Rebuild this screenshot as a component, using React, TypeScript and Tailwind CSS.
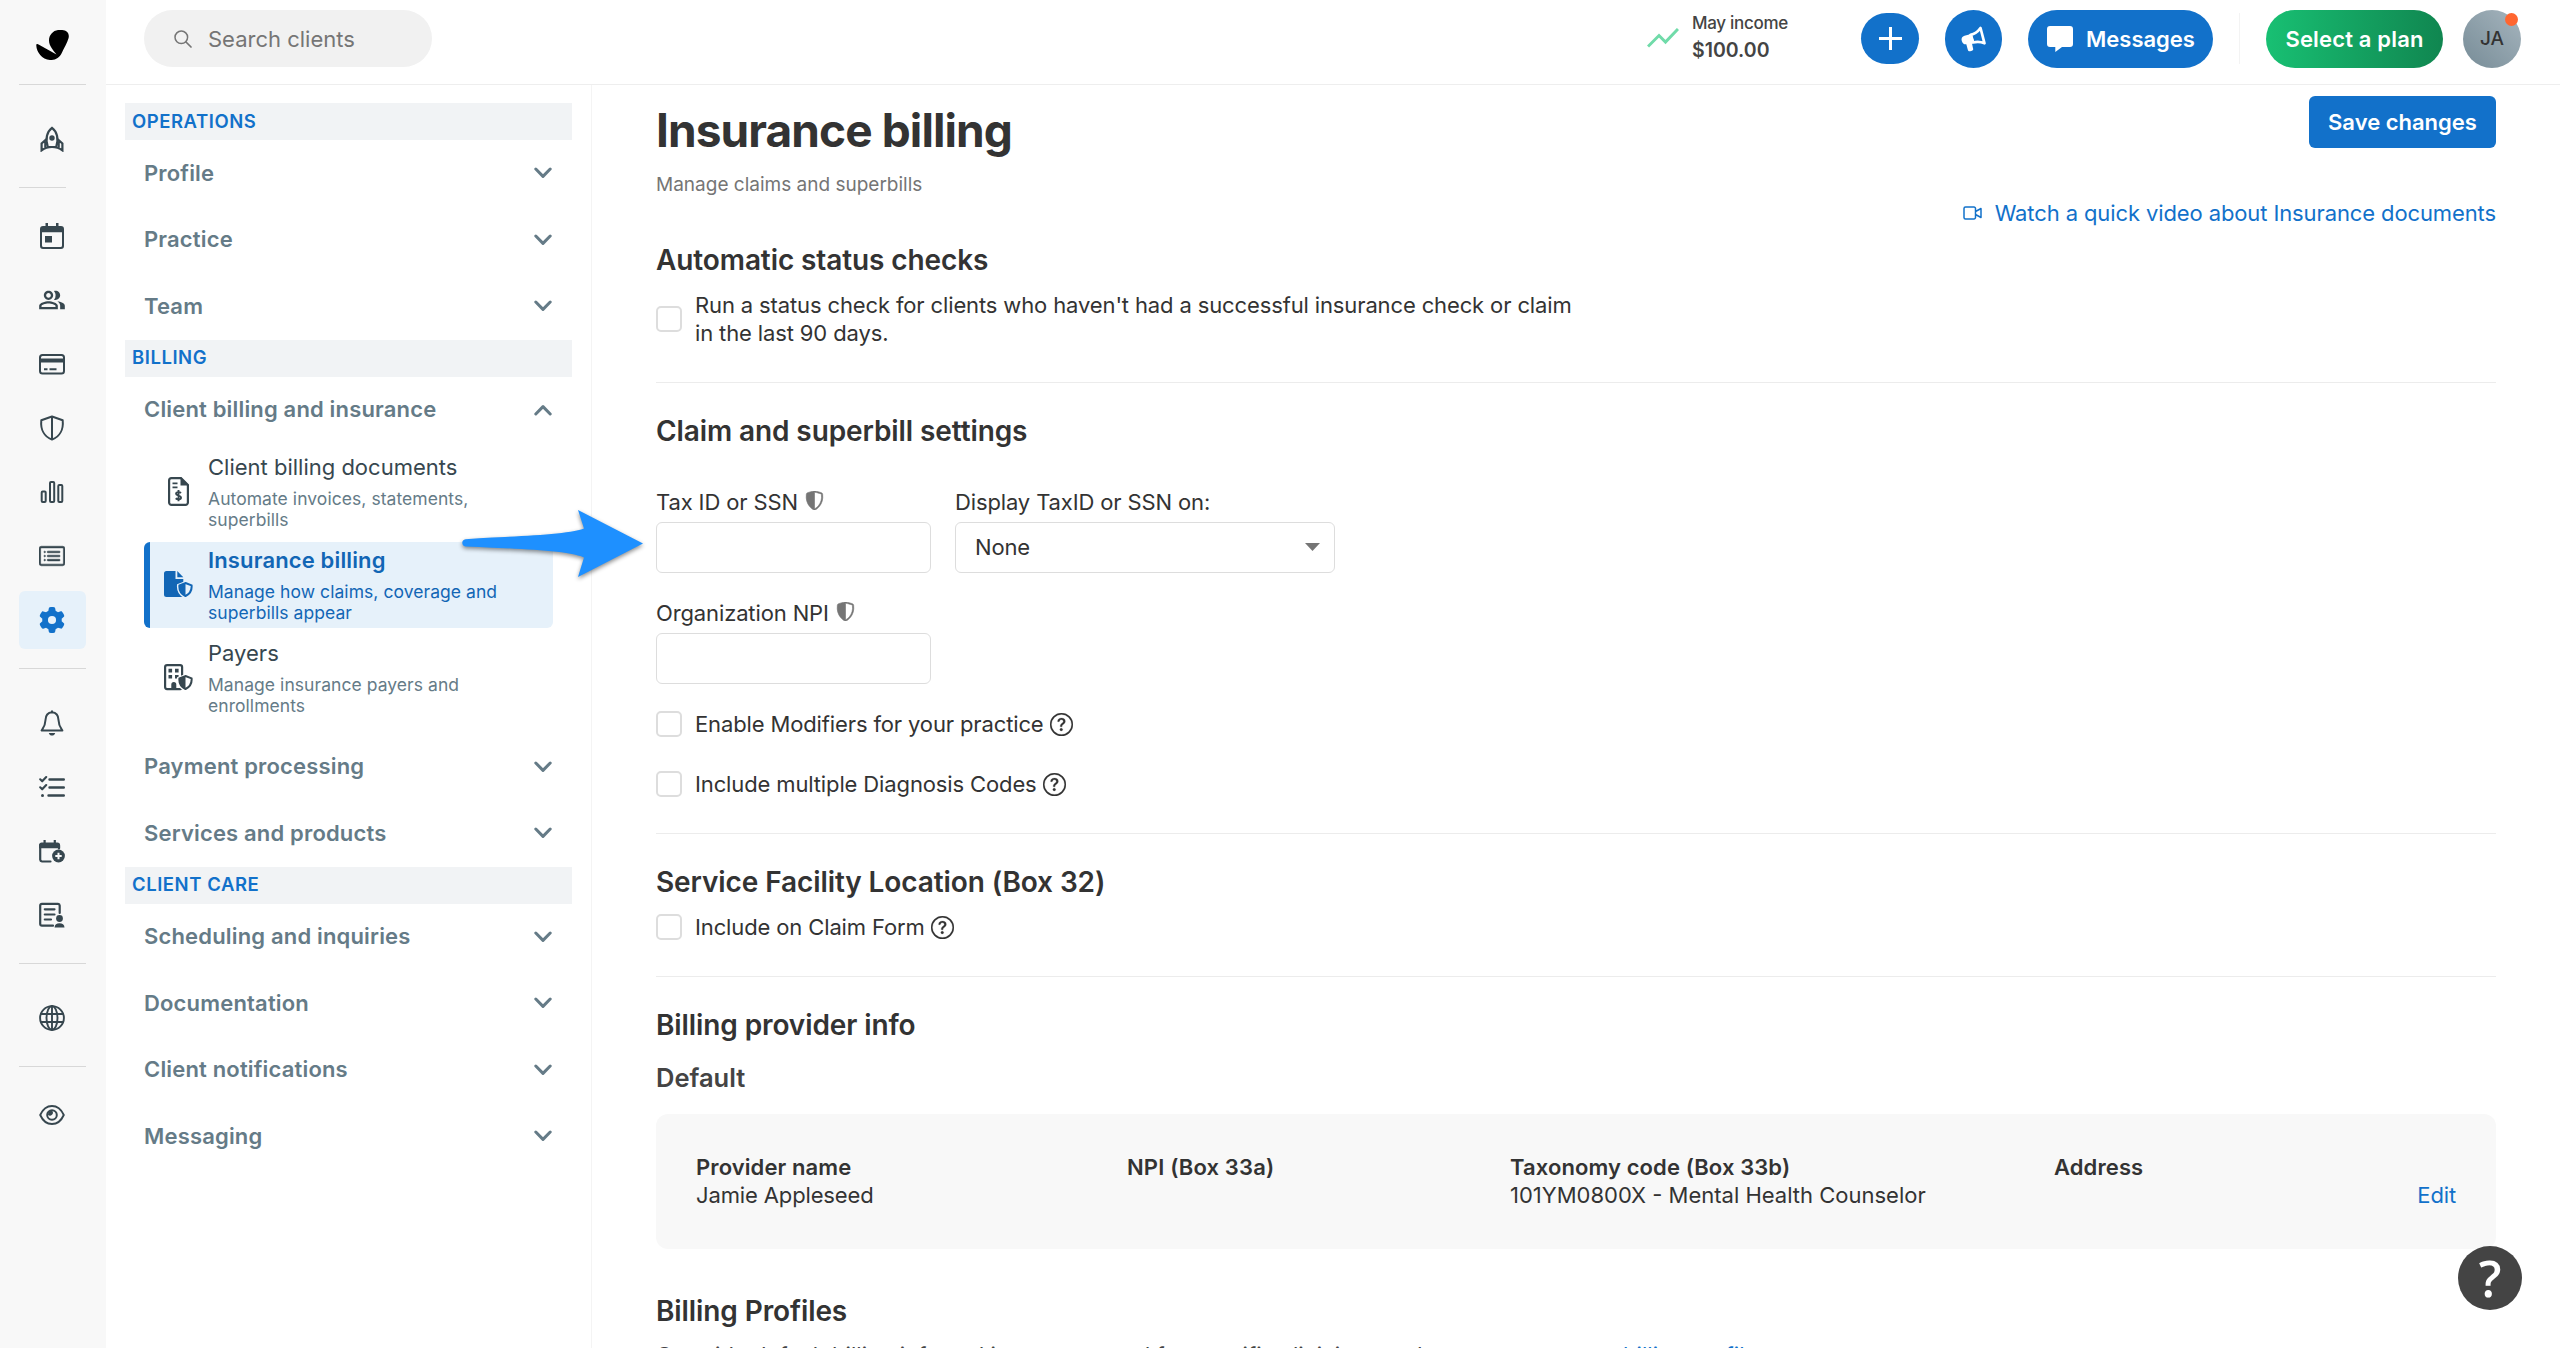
import type { ReactNode } from 'react';
import { BsCardList, BsQuestionCircle, BsShieldShaded } from 'react-icons/bs';
import { FaGear } from 'react-icons/fa6';
import { MdOutlinePeopleAlt } from 'react-icons/md';

const stroke = { fill: 'none', stroke: 'currentColor', strokeLinecap: 'round', strokeLinejoin: 'round' } as const;

const Svg = ({ children, className = 'w-[26px] h-[26px]' }: { children: ReactNode; className?: string }) => (
  <svg viewBox="0 0 26 26" className={className} fill="currentColor">{children}</svg>
);

const Logo = () => (
  <svg viewBox="0 0 33 30" className="w-[33px] h-[30px]" fill="#000">
    <path d="M22 0C28 -.6 34 1 32.6 8C31.200 13 28 18 26 22.500C23.500 28 19 30.300 14 30C6 29.500 .5 22 .3 15.500C.2 13.600 1.500 13.900 3 14.700L20.500 24.600C17.500 20.500 13 16 13 10.500C13 5 17 .6 22 0Z" />
  </svg>
);

const RocketIcon = () => (
  <Svg>
    <g {...stroke} strokeWidth="2.200" strokeLinejoin="miter">
      <path d="M8.800 21C6 13 8 5.500 13 1.800C18 5.500 20 13 17.200 21Z" />
      <path d="M7 13.500L2.600 17.500V24.300C6 21.800 9 21 13 21C17 21 20 21.800 23.400 24.300V17.500L19 13.500M6.300 16V21M19.700 16V21" />
    </g>
    <circle cx="13" cy="12" r="2.700" />
  </Svg>
);

const CalendarIcon = () => (
  <Svg>
    <path d="M6.500 0h2.500v3h8V0h2.500v3H22a3 3 0 0 1 3 3v17a3 3 0 0 1-3 3H4a3 3 0 0 1-3-3V6a3 3 0 0 1 3-3h2.500zM3 9.300V22.500A1.500 1.500 0 0 0 4.500 24h17a1.500 1.500 0 0 0 1.500-1.500V9.300z" fillRule="evenodd" />
    <rect x="6" y="13" width="7" height="6.500" />
  </Svg>
);

const CardIcon = () => (
  <Svg>
    <rect x="1" y="4" width="24" height="18.500" rx="2.500" {...stroke} strokeWidth="2" />
    <path d="M1 7.500h24v4H1zM5 17.300h3.500v2H5zM10.500 17.300h7v2h-7z" />
  </Svg>
);

const ShieldOutlineIcon = () => (
  <Svg>
    <path d="M13 1.500L23.700 5.300C24.600 14 21 21.500 13 24.600C5 21.500 1.400 14 2.300 5.300ZM13 1.500V24.500" {...stroke} strokeWidth="2" />
  </Svg>
);

const BarsIcon = () => (
  <Svg>
    <g {...stroke} strokeWidth="2">
      <rect x="2.700" y="12.500" width="4" height="10.500" rx="1" />
      <rect x="11" y="3" width="4.200" height="20" rx="1" />
      <rect x="19.300" y="6" width="4" height="17" rx="1" />
    </g>
  </Svg>
);

const BellIcon = () => (
  <Svg>
    <path d="M13 2.200C8.500 2.500 6.600 5.500 6.500 10C6.400 15.500 4.600 17.500 2.600 20.500H23.400C21.400 17.500 19.600 15.500 19.500 10C19.400 5.500 17.500 2.500 13 2.200ZM13 2.200V1.200" {...stroke} strokeWidth="2" />
    <path d="M9.800 23h6.400c-.6 1.800-1.700 2.600-3.200 2.600s-2.600-.8-3.200-2.600z" />
  </Svg>
);

const ChecklistIcon = () => (
  <Svg>
    <path d="M10.500 5.500H24.800M10.500 13.500H24.800M9.500 21.500H24.800" {...stroke} strokeWidth="2.400" />
    <path d="M1.200 5.300L3.200 7.300L7.200 3M1.200 13.300L3.200 15.300L7.200 11" {...stroke} strokeWidth="2.100" />
    <circle cx="3.500" cy="21.500" r="1.500" />
  </Svg>
);

const CalendarPlusIcon = () => (
  <Svg>
    <path d="M20 10.500V7.500M11.500 23.500H3A2 2 0 0 1 1.200 21.700V7" {...stroke} strokeWidth="2.200" />
    <path d="M4.500 2h2.200v2.400h8V2h2.200v2.400h1.500a2.700 2.700 0 0 1 2.700 2.700v3.200H.1V7.100a2.700 2.700 0 0 1 2.700-2.700h1.700z" />
    <circle cx="19.500" cy="18" r="6.400" />
    <path d="M19.500 14.800v6.400M16.300 18h6.400" stroke="#f8f8f8" strokeWidth="2" />
  </Svg>
);

const NoteUserIcon = () => (
  <Svg>
    <path d="M20.700 11V3.500A1.800 1.800 0 0 0 19 1.800H3A1.800 1.800 0 0 0 1.200 3.500V22A1.800 1.800 0 0 0 3 23.700H14M5.800 7.300H15.500M5.800 12.500H15.500M5.800 17.500H12" {...stroke} strokeWidth="2.200" />
    <circle cx="20.500" cy="16.500" r="3.400" />
    <path d="M15.500 25.500c.3-3 2-4.200 5-4.200s4.800 1.200 5 4.200z" />
  </Svg>
);

const GlobeIcon = () => (
  <Svg>
    <g {...stroke} strokeWidth="1.900">
      <circle cx="13" cy="13" r="11.900" />
      <ellipse cx="13" cy="13" rx="5.500" ry="11.900" />
      <path d="M2 9H24M2 17H24M13 1V25" />
    </g>
  </Svg>
);

const EyeIcon = () => (
  <Svg>
    <path d="M1.200 13C4 6.800 8 4 13 4S22 6.800 24.800 13C22 19.200 18 22 13 22S4 19.200 1.200 13Z" {...stroke} strokeWidth="1.900" />
    <circle cx="13" cy="13" r="4.800" {...stroke} strokeWidth="2" />
    <path d="M13 8.800A4 4 0 0 0 9 12.800A2.500 2.500 0 0 0 13 8.800Z" />
  </Svg>
);

const InvoiceIcon = () => (
  <svg viewBox="0 0 21 29" className="w-[21px] h-[29px]" fill="none" stroke="currentColor" strokeWidth="2.200">
    <path d="M13 1.100H3.500A2.400 2.400 0 0 0 1.100 3.500V25.500A2.400 2.400 0 0 0 3.500 27.900H17.500A2.400 2.400 0 0 0 19.900 25.500V8Z" />
    <path d="M12.500 0L21 8.500H12.500Z" fill="currentColor" stroke="none" />
    <path d="M4.500 6.300H9.500M4.500 10.300H9.500" strokeWidth="1.800" />
    <path d="M13 16C11.500 14.600 8 14.900 8 16.800C8 19 13 18.200 13 20.700C13 22.600 9.300 22.800 7.700 21.300M10.500 13V24.300" strokeWidth="1.900" />
  </svg>
);

const SmallShield = ({ halo }: { halo: string }) => (
  <g>
    <path d="M21.500 11.500L28.500 14.200C29 19.500 26.500 23.800 21.500 26C16.500 23.800 14 19.500 14.500 14.200Z" fill={halo} stroke={halo} strokeWidth="3" />
    <path d="M21.500 12L27.600 14.400C28 19 26 22.800 21.500 25C17 22.800 15 19 15.400 14.400Z" fill="none" stroke="currentColor" strokeWidth="2" />
    <path d="M21.500 12V25C17 22.800 15 19 15.400 14.400Z" />
  </g>
);

const ClaimIcon = () => (
  <svg viewBox="0 0 29 27" className="w-[29px] h-[27px]" fill="currentColor">
    <path d="M2.500 0H11.500V8H19.300V26H2.500A2.500 2.500 0 0 1 0 23.500V2.500A2.500 2.500 0 0 1 2.500 0Z" />
    <path d="M13.300 0L19.300 6.200H13.300Z" />
    <SmallShield halo="#e6f1fa" />
  </svg>
);

// left half is solid, so the shield reads as split
const PayersIcon = () => (
  <svg viewBox="0 0 29 27" className="w-[29px] h-[27px]" fill="currentColor">
    <rect x="1.100" y="1.100" width="17" height="24" rx="2" fill="none" stroke="currentColor" strokeWidth="2.200" />
    <path d="M4.500 4.800h3.600v3.600H4.500zM11 4.800h3.600v3.600H11zM4.500 11h3.600v3.600H4.500zM11 11h3.600v3.600H11zM7.300 26v-5.500a2.500 2.500 0 0 1 5 0V26z" />
    <SmallShield halo="#ffffff" />
  </svg>
);

const Chevron = ({ up = false }: { up?: boolean }) => (
  <svg viewBox="0 0 18 12" className={up ? 'w-[18px] h-[12px] rotate-180' : 'w-[18px] h-[12px]'}>
    <path d="M1.800 2L9 9.400L16.200 2" {...stroke} strokeWidth="3" />
  </svg>
);

const Checkbox = () => <span className="size-[26px] shrink-0 rounded-[5px] border-2 border-[#ddd] bg-white" />;

const RailItem = ({ children, active = false }: { children: ReactNode; active?: boolean }) => (
  <div className="flex h-16 items-center">
    <div className={active ? 'flex h-[58px] w-[67px] items-center justify-center rounded-[6px] bg-[#e6f1fa] pr-px text-[#1271ca]' : 'flex w-[67px] items-center justify-center pr-px'}>
      {children}
    </div>
  </div>
);

const Rail = () => (
  <nav className="w-[106px] shrink-0 bg-[#f8f8f8] pl-[19px] text-[#37474f]">
    <div className="flex h-[84px] items-start pt-[30px] pl-[17px]"><Logo /></div>
    <div className="mb-[22px] h-px w-[67px] bg-[#d8d8d8]" />
    <RailItem><RocketIcon /></RailItem>
    <div className="my-4 h-px w-[47px] bg-[#d8d8d8]" />
    <RailItem><CalendarIcon /></RailItem>
    <RailItem><MdOutlinePeopleAlt className="size-[28px]" /></RailItem>
    <RailItem><CardIcon /></RailItem>
    <RailItem><ShieldOutlineIcon /></RailItem>
    <RailItem><BarsIcon /></RailItem>
    <RailItem><BsCardList className="size-[26px]" strokeWidth="0.35" /></RailItem>
    <RailItem active><FaGear className="size-[26px]" /></RailItem>
    <div className="mt-4 mb-[22px] h-px w-[67px] bg-[#d8d8d8]" />
    <RailItem><BellIcon /></RailItem>
    <RailItem><ChecklistIcon /></RailItem>
    <RailItem><CalendarPlusIcon /></RailItem>
    <RailItem><NoteUserIcon /></RailItem>
    <div className="mt-4 mb-[22px] h-px w-[67px] bg-[#d8d8d8]" />
    <RailItem><GlobeIcon /></RailItem>
    <div className="my-4 h-px w-[67px] bg-[#d8d8d8]" />
    <RailItem><EyeIcon /></RailItem>
  </nav>
);

const Header = () => (
  <header className="flex h-[85px] shrink-0 items-start border-b border-[#eeeeee] pt-[10px] pr-[39px] pl-[38px]">
    <div className="flex h-[57px] w-[288px] items-center rounded-full bg-[#f1f1f1] pt-px pl-[30px] text-[22px] text-[#757575]">
      <svg viewBox="0 0 18 18" className="mr-4 size-[18px]">
        <circle cx="7.300" cy="7.300" r="6.300" {...stroke} strokeWidth="1.500" />
        <path d="M12 12L17 17" {...stroke} strokeWidth="1.700" />
      </svg>
      Search clients
    </div>
    <div className="ml-auto flex">
      <svg viewBox="0 0 32 20" className="mt-[18px] mr-[13px] h-5 w-8">
        <path d="M1 18.500L12 7.500L18.500 14L31 1" fill="none" stroke="#70dba9" strokeWidth="3" />
      </svg>
      <div className="w-[169px] text-[#444]">
        <div className="text-[17px] leading-[26px] font-medium tracking-[-0.3px]">May income</div>
        <div className="text-[19.500px] leading-[29px] font-semibold">$100.00</div>
      </div>
      <div className="mt-[3px] flex h-[51px] w-[58px] items-center justify-center rounded-full bg-[#1271ca]">
        <svg viewBox="0 0 23 23" className="size-[23px]"><path d="M11.500 0V23M0 11.500H23" stroke="#fff" strokeWidth="3" /></svg>
      </div>
      <div className="ml-[26px] flex h-[58px] w-[57px] items-center justify-center rounded-full bg-[#1271ca]">
        <svg viewBox="0 0 26 26" className="size-[26px]" fill="#fff">
          <path d="M9.500 8.800C13 8.200 17 5.500 19.500 2L23.500 17.300C20 15.800 16 15.500 12 16.500Z" fill="none" stroke="#fff" strokeWidth="2.700" strokeLinejoin="round" />
          <path d="M11 7.800L3.500 9.800C.6 10.800 .2 13 .9 15.200C1.500 17.500 3.200 18.600 5.300 18.300L6.800 23.700C7.200 25.300 8.300 25.500 9.300 25.200L11 24.700C12.200 24.200 12.500 23.500 12 22.200L11 17.500L13.500 16.500Z" />
        </svg>
      </div>
      <div className="ml-[26px] flex h-[58px] w-[185px] items-center rounded-full bg-[#1271ca] pl-[19px] text-[22px] font-semibold text-white">
        <svg viewBox="0 0 26 26" className="mr-[13px] size-[26px]" fill="#fff"><path d="M3 0H23a3 3 0 0 1 3 3V18a3 3 0 0 1-3 3H15L8.300 26V21H3a3 3 0 0 1-3-3V3a3 3 0 0 1 3-3z" /></svg>
        Messages
      </div>
      <div className="mt-[3px] ml-[26px] h-[51px] w-px bg-[#f3f3f3]" />
      <div className="ml-[26px] flex h-[58px] w-[177px] items-center justify-center rounded-full bg-linear-to-r from-[#18c073] to-[#108650] text-[22px] font-semibold tracking-[0.17px] whitespace-nowrap text-white">
        Select a plan
      </div>
      <div className="relative ml-5 flex size-[58px] items-center justify-center rounded-full bg-linear-to-bl from-[#a6b5be] to-[#778c97] text-[19px] font-medium text-[#333]">
        JA
        <span className="absolute top-[3px] right-[3px] size-[13px] rounded-full bg-[#ff6630]" />
      </div>
    </div>
  </header>
);

const SectionTitle = ({ children }: { children: ReactNode }) => (
  <div className="ml-[19px] flex h-[37px] w-[447px] shrink-0 items-center bg-[#f1f3f5] pl-[7px] text-[18.500px] font-semibold tracking-[0.55px] text-[#1271ca]">
    {children}
  </div>
);

const Group = ({ title, open = false }: { title: string; open?: boolean }) => (
  <div className="flex h-[66.500px] shrink-0 items-center justify-between pr-[39px] pl-[38px] text-[22px] font-semibold tracking-[0.17px] text-[#657b87]">
    {title}
    <Chevron up={open} />
  </div>
);

const SubItem = ({ icon, title, lines, active = false }: { icon: ReactNode; title: string; lines: string[]; active?: boolean }) => (
  <div className={`flex h-[86px] w-[409px] ${active ? 'rounded-[6px] border-l-[6px] border-[#1271ca] bg-[#e6f1fa] text-[#1266b5]' : 'border-l-[6px] border-transparent text-[#37474f]'}`}>
    <div className="flex w-[58px] items-center justify-center pr-[2px]">{icon}</div>
    <div className="pt-[5px]">
      <div className={`text-[22px] leading-[26px] ${active ? 'font-semibold tracking-[0.15px]' : ''}`}>{title}</div>
      <div className={`mt-2 text-[17.500px] leading-[21px] tracking-[0.06px] ${active ? '' : 'text-[#657b87]'}`}>
        {lines.map((l) => <div key={l}>{l}</div>)}
      </div>
    </div>
  </div>
);

const Sidebar = () => (
  <aside className="flex w-[486px] shrink-0 flex-col border-r border-[#f4f4f4] pt-[18px]">
    <SectionTitle>OPERATIONS</SectionTitle>
    <Group title="Profile" />
    <Group title="Practice" />
    <Group title="Team" />
    <SectionTitle>BILLING</SectionTitle>
    <Group title="Client billing and insurance" open />
    <div className="mb-[13px] ml-[38px] flex flex-col gap-[7px] pt-[5.500px]">
      <SubItem icon={<InvoiceIcon />} title="Client billing documents" lines={['Automate invoices, statements,', 'superbills']} />
      <SubItem icon={<ClaimIcon />} title="Insurance billing" lines={['Manage how claims, coverage and', 'superbills appear']} active />
      <SubItem icon={<PayersIcon />} title="Payers" lines={['Manage insurance payers and', 'enrollments']} />
    </div>
    <Group title="Payment processing" />
    <Group title="Services and products" />
    <SectionTitle>CLIENT CARE</SectionTitle>
    <Group title="Scheduling and inquiries" />
    <Group title="Documentation" />
    <Group title="Client notifications" />
    <Group title="Messaging" />
  </aside>
);

const H3 = ({ children }: { children: ReactNode }) => (
  <h3 className="text-[28px] leading-9 font-semibold tracking-[-0.1px]">{children}</h3>
);

const Field = ({ label }: { label: string }) => (
  <div className="w-[275px]">
    <div className="flex h-[28px] items-center gap-[7px]">
      {label} <BsShieldShaded className="mb-1 size-[19px] text-[#757575]" strokeWidth="0.5" />
    </div>
    <div className="mt-1.5 h-[51px] rounded-[6px] border border-[#ddd]" />
  </div>
);

const CheckRow = ({ label }: { label: string }) => (
  <div className="flex h-[26px] items-center">
    <Checkbox />
    <span className="mr-1.5 ml-[13px]">{label}</span>
    <BsQuestionCircle className="size-[23px]" strokeWidth="0.15" />
  </div>
);

const Settings = () => (
  <main className="min-w-0 flex-1 px-16 text-[22px] leading-[28px] tracking-[-0.13px] text-[#333]">
    <div className="flex h-[157px] justify-between">
      <div className="pt-[17px]">
        <h1 className="text-[46px] leading-[56px] font-bold tracking-[-0.9px]">Insurance billing</h1>
        <p className="mt-[13px] text-[19px] tracking-normal text-[#757575]">Manage claims and superbills</p>
      </div>
      <div className="flex flex-col items-end pt-[11px]">
        <button className="h-[52px] w-[187px] rounded-[6px] bg-[#1271ca] font-semibold tracking-normal text-white">Save changes</button>
        <div className="mt-[51px] flex items-center gap-[13px] tracking-[-0.11px] text-[#1271ca]">
          <svg viewBox="0 0 19 14" className="h-[14px] w-[19px]">
            <path d="M2.500 1H11a1.500 1.500 0 0 1 1.500 1.500V11.500A1.500 1.500 0 0 1 11 13H2.500A1.500 1.500 0 0 1 1 11.500V2.500A1.500 1.500 0 0 1 2.500 1ZM12.500 5.500L18 2.500V11.500L12.500 8.500" {...stroke} strokeWidth="1.500" />
          </svg>
          Watch a quick video about Insurance documents
        </div>
      </div>
    </div>
    <section className="h-[141px] border-b border-[#ececec]">
      <H3>Automatic status checks</H3>
      <div className="mt-[13px] flex items-center gap-[13px]">
        <Checkbox />
        <div>
          Run a status check for clients who haven't had a successful insurance check or claim
          <br />
          in the last 90 days.
        </div>
      </div>
    </section>
    <section className="h-[451px] border-b border-[#ececec] pt-[30px]">
      <H3>Claim and superbill settings</H3>
      <div className="mt-[39px] flex gap-6">
        <Field label="Tax ID or SSN" />
        <div className="w-[380px]">
          <div>Display TaxID or SSN on:</div>
          <div className="mt-1.5 flex h-[51px] items-center justify-between rounded-[6px] border border-[#ddd] pr-[14px] pb-px pl-[19px]">
            None
            <svg viewBox="0 0 15 8" className="h-2 w-[15px]"><path d="M0 0H15L7.500 8Z" fill="#757575" /></svg>
          </div>
        </div>
      </div>
      <div className="mt-[26px]"><Field label="Organization NPI" /></div>
      <div className="mt-[27px] flex flex-col gap-[34px]">
        <CheckRow label="Enable Modifiers for your practice" />
        <CheckRow label="Include multiple Diagnosis Codes" />
      </div>
    </section>
    <section className="h-[143px] border-b border-[#ececec] pt-[30px]">
      <H3>Service Facility Location (Box 32)</H3>
      <div className="mt-[14px]"><CheckRow label="Include on Claim Form" /></div>
    </section>
    <section className="pt-[30px]">
      <H3>Billing provider info</H3>
      <h4 className="mt-[19px] text-[25.500px] leading-8 font-semibold tracking-normal text-[#444]">Default</h4>
      <div className="mt-5 flex h-[135px] rounded-[12px] bg-[#f8f8f8] px-[40px] pt-[39px] whitespace-nowrap">
        <div className="w-[431px]">
          <div className="font-semibold tracking-[0.1px]">Provider name</div>
          <div>Jamie Appleseed</div>
        </div>
        <div className="w-[383px] font-semibold tracking-[0.15px]">NPI (Box 33a)</div>
        <div className="w-[544px]">
          <div className="font-semibold tracking-[0.1px]">Taxonomy code (Box 33b)</div>
          <div className="tracking-normal">101YM0800X - Mental Health Counselor</div>
        </div>
        <div className="font-semibold tracking-[0.1px]">Address</div>
        <div className="ml-auto pt-[28px] text-[#1271ca]">Edit</div>
      </div>
      <div className="mt-[44px]"><H3>Billing Profiles</H3></div>
      <p className="mt-3 tracking-[0.05px] whitespace-nowrap text-[#444]">
        Override default billing info and insurance used for specific clinicians and payers to <span className="text-[#1271ca]">create a billing profile</span>
      </p>
    </section>
  </main>
);

export default function App() {
  return (
    <div className="relative flex h-[1348px] w-[2560px] overflow-hidden bg-white font-['Inter',sans-serif]">
      <Rail />
      <div className="flex min-w-0 flex-1 flex-col">
        <Header />
        <div className="flex min-h-0 flex-1">
          <Sidebar />
          <Settings />
        </div>
      </div>
      {/* callout arrow */}
      <svg viewBox="0 0 190 76" className="absolute top-[506px] left-[458px] h-[76px] w-[190px] drop-shadow-[0_2px_2px_rgba(0,0,0,0.45)]">
        <path d="M7.500 33.200C60 30 108 29 126 22.500L120 4L185 37.500L120 71L126 51.500C108 44 60 43 7.500 40.500C3.200 40 3.200 33.500 7.500 33.200Z" fill="#1e90ff" />
      </svg>
      <div className="absolute top-[1246px] left-[2458px] flex size-16 items-center justify-center rounded-full bg-[#444] text-[50px] leading-none font-semibold text-white font-['Open_Sans',sans-serif]">?</div>
    </div>
  );
}
